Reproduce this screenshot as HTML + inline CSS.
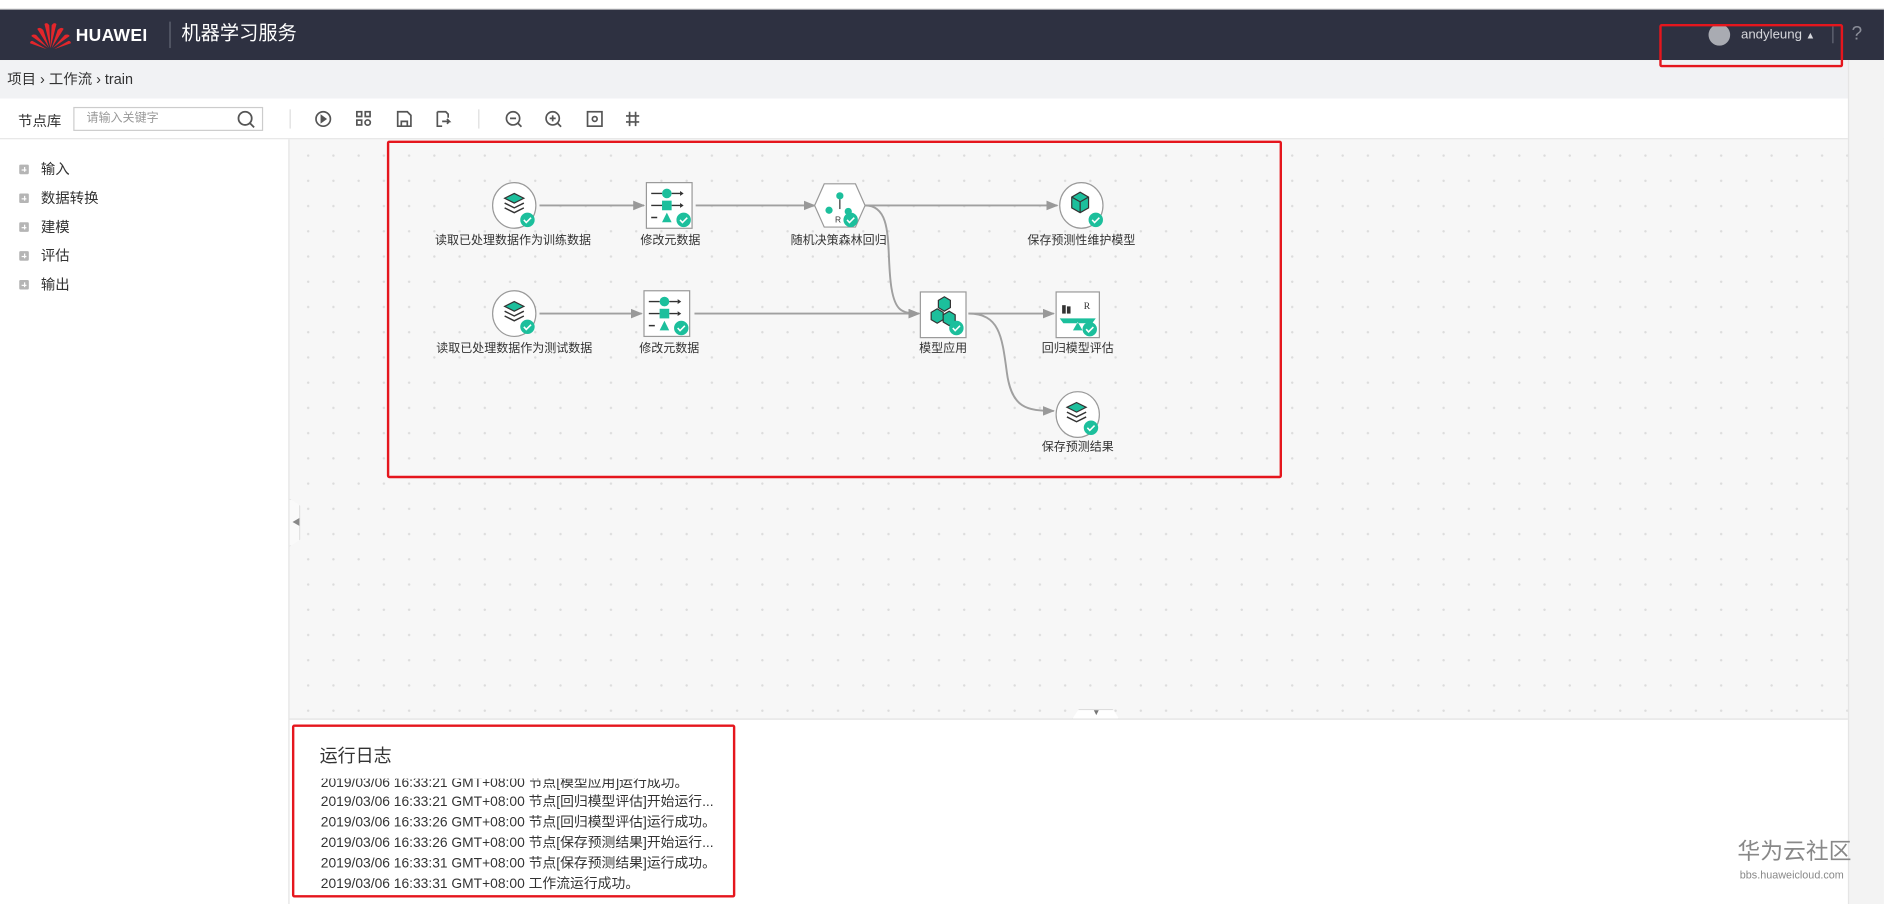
<!DOCTYPE html>
<html><head><meta charset="utf-8">
<style>
*{margin:0;padding:0;box-sizing:border-box}
html,body{width:1884px;height:904px;overflow:hidden;background:#fff}
#w{width:1568px;height:752.4px;transform:scale(1.2015);transform-origin:0 0;position:relative;font-family:"Liberation Sans","Noto Sans CJK SC",sans-serif;color:#333}
.abs{position:absolute}
.top{left:0;top:0;width:1568px;height:8px;background:#fff;border-bottom:1px solid #ddd}
.hdr{left:0;top:8px;width:1568px;height:42px;background:#2e3141;line-height:1}
.bc{left:0;top:50px;width:1568px;height:32px;background:#f1f2f4;font-size:12px;line-height:32px;padding-left:6px;color:#333}
.tb{left:0;top:82px;width:1568px;height:34px;background:#fff;border-bottom:1px solid #e4e4e4}
.side{left:0;top:116px;width:241px;height:637px;background:#fff;border-right:1px solid #e2e2e2}
.side div{position:absolute;left:16px;font-size:12px;color:#333;line-height:14px}
.side span{display:inline-block;width:8px;height:8px;background:#b5b5b5;border-radius:1px;margin-right:10px;vertical-align:0px;position:relative}
.side span:after{content:"";position:absolute;left:2px;top:3.5px;width:4px;height:1px;background:#fff}
.side span:before{content:"";position:absolute;left:3.5px;top:2px;width:1px;height:4px;background:#fff}
.cv{left:241px;top:116px;width:1297px;height:482px;background-color:#f7f7f7;
background-image:radial-gradient(circle,#dcdcdc 0.8px,transparent 1.2px);background-size:21px 21px;background-position:5px 3px}
.log{left:241px;top:598px;width:1297px;height:155px;background:#fff;border-top:1px solid #e0e0e0}
.sb{left:1538px;top:50px;width:30px;height:703px;background:#f3f3f3;border-left:1px solid #e5e5e5}
.red{border:2px solid #e5161d;border-radius:2px}
.lg{position:absolute;left:26px;font-size:11.5px;color:#333;white-space:nowrap}
</style></head><body><div id="w">
<div class="abs top"></div>
<div class="abs hdr">
 <svg class="abs" style="left:24px;top:9px" width="36" height="24" viewBox="0 0 36 24">
  <g fill="#e3262b">
   <path d="M18 23 L13 3 Q15 1 17 4 Z"/><path d="M18 23 L23 3 Q21 1 19 4 Z"/>
   <path d="M17 23 L7 7 Q9 5 12 8 Z"/><path d="M19 23 L29 7 Q27 5 24 8 Z"/>
   <path d="M16 23 L2 13 Q3 11 6 12 Z"/><path d="M20 23 L34 13 Q33 11 30 12 Z"/>
   <path d="M15 24 L1 19 Q1 17 3 17 Z"/><path d="M21 24 L35 19 Q35 17 33 17 Z"/>
  </g></svg>
 <div class="abs" style="left:63px;top:15px;color:#fff;font-weight:bold;font-size:14.5px;letter-spacing:0.3px">HUAWEI</div>
 <div class="abs" style="left:141px;top:10px;width:1px;height:22px;background:#666a78"></div>
 <div class="abs" style="left:151px;top:13px;color:#fff;font-size:16px">机器学习服务</div>
 <div class="abs" style="left:1422px;top:12px;width:18px;height:18px;border-radius:50%;background:#a9abb2"></div>
 <div class="abs" style="left:1449px;top:16px;color:#d6d7dc;font-size:11px">andyleung <span style="font-size:8px">▲</span></div>
 <div class="abs" style="left:1525px;top:14px;width:1px;height:14px;background:#666a78"></div>
 <div class="abs" style="left:1541px;top:13px;color:#8a8d98;font-size:16px">?</div>
</div>
<div class="abs bc">项目 › 工作流 › train</div>
<div class="abs tb">
 <div class="abs" style="left:15px;top:10px;font-size:12px">节点库</div>
 <div class="abs" style="left:61px;top:7px;width:158px;height:20px;border:1px solid #ccc;font-size:10px;color:#999;padding-left:10px;line-height:18px">请输入关键字</div>
 <svg class="abs" style="left:196px;top:9px" width="18" height="18" viewBox="0 0 18 18" fill="none" stroke="#555" stroke-width="1.5"><circle cx="8" cy="7.5" r="5.5"/><path d="M12 11.5l3.5 3.5"/></svg>
 <div class="abs" style="left:241px;top:9px;width:1px;height:16px;background:#ddd"></div>
 <div class="abs" style="left:398px;top:9px;width:1px;height:16px;background:#ddd"></div>
 <svg class="abs" style="left:260px;top:8px" width="290" height="18" viewBox="0 0 290 18" fill="none" stroke="#555" stroke-width="1.4">
  <circle cx="9" cy="9" r="6"/><path d="M7.5 6.5v5l3.5-2.5z" fill="#555"/>
  <rect x="37" y="3" width="4" height="4"/><rect x="44" y="3" width="4" height="4"/><rect x="37" y="10" width="4" height="4"/><circle cx="46" cy="12" r="2.2"/>
  <path d="M71 3h8l3 3v9h-11z M74 15v-4h5v4"/>
  <path d="M104 3h7l2 2v3 M104 3v12h4 M108 11h6 l-2-2 M114 11l-2 2"/>
  <circle cx="167" cy="8.5" r="5.5"/><path d="M164.5 8.5h5 M171 12.5l3 3"/>
  <circle cx="200" cy="8.5" r="5.5"/><path d="M197.5 8.5h5 M200 6v5 M204 12.5l3 3"/>
  <rect x="229" y="3" width="12" height="12"/><circle cx="235" cy="9" r="2"/>
  <path d="M264 3v12 M269 3v12 M261 6.5h11 M261 11.5h11"/>
 </svg>
</div>
<div class="abs side">
 <div style="top:18px"><span></span>输入</div>
 <div style="top:42px"><span></span>数据转换</div>
 <div style="top:66px"><span></span>建模</div>
 <div style="top:90px"><span></span>评估</div>
 <div style="top:114px"><span></span>输出</div>
</div>
<div class="abs cv"></div>
<div class="abs" style="left:241px;top:415px;width:9px;height:40px;background:#fafafa;border:1px solid #ddd;border-left:none;clip-path:polygon(0 0,100% 15%,100% 85%,0 100%)"></div>
<div class="abs" style="left:243px;top:430px;font-size:7px;color:#888">◀</div>
<div class="abs" style="left:892px;top:590px;width:40px;height:9px;background:#fff;border:1px solid #ddd;border-bottom:none;clip-path:polygon(15% 0,85% 0,100% 100%,0 100%)"></div>
<div class="abs" style="left:909px;top:590px;font-size:7px;color:#777">▼</div>

<svg class="abs" style="left:0;top:0" width="1568" height="752" viewBox="0 0 1568 752" font-family="Liberation Sans,Noto Sans CJK SC,sans-serif" font-size="10" fill="#333">
 <defs><marker id="a" markerWidth="10" markerHeight="8" refX="9" refY="4" orient="auto" markerUnits="userSpaceOnUse"><path d="M0 0L10 4L0 8z" fill="#999"/></marker>
 <g id="ck"><circle r="6" fill="#1cbf9c"/><path d="M-3 0l2 2.2 4-4" stroke="#fff" stroke-width="1.3" fill="none"/></g>
 <g id="lay"><path d="M0-9l8 4-8 4-8-4z" fill="#1cbf9c" stroke="#333" stroke-width="1"/><path d="M-8 -1l8 4 8-4 M-8 3l8 4 8-4" fill="none" stroke="#333" stroke-width="1.2"/></g>
 <g id="meta"><path d="M-13-10h9 M4-10h7 M-13 0h9 M4 0h7 M-13 10h5" stroke="#333" stroke-width="1.2"/><path d="M11-12l3 2-3 2z M11-2l3 2-3 2z" fill="#333"/><circle cx="0" cy="-10" r="4" fill="#1cbf9c"/><rect x="-4" y="-4" width="8" height="8" fill="#1cbf9c"/><path d="M0 6l4 8h-8z" fill="#1cbf9c"/></g>
 </defs>
 <g stroke="#a0a0a0" stroke-width="1.6" fill="none" marker-end="url(#a)">
  <path d="M449 171H536"/><path d="M579 171H678"/><path d="M719 171H880"/>
  <path d="M720 171C745 171 737 210 742 240C745 258 750 261 765 261"/>
  <path d="M449 261H534"/><path d="M578 261H765"/><path d="M806 261H877"/>
  <path d="M806 261C832 261 834 280 838 310C842 340 855 342 877 342"/>
 </g>
 <g><ellipse cx="428" cy="171" rx="18" ry="19" fill="#fff" stroke="#999"/><use href="#lay" x="428" y="170"/><use href="#ck" x="439" y="183"/></g>
 <g><rect x="538" y="152" width="38" height="38" fill="#fff" stroke="#999"/><use href="#meta" x="555" y="171"/><use href="#ck" x="569" y="183"/></g>
 <g><path d="M686 153h26l8 18-8 18h-26l-8-18z" fill="#fff" stroke="#999"/><circle cx="699" cy="163" r="3" fill="#1cbf9c"/><path d="M699 166v8" stroke="#333"/><circle cx="690" cy="175" r="3" fill="#1cbf9c"/><circle cx="706" cy="176" r="3" fill="#1cbf9c"/><text x="695" y="185" font-size="7">R</text><use href="#ck" x="708" y="183"/></g>
 <g><ellipse cx="900" cy="171" rx="18" ry="19" fill="#fff" stroke="#999"/><path d="M892 164l7-4 7 4v9l-7 4-7-4z" fill="#1cbf9c" stroke="#333"/><path d="M892 164l7 4 7-4 M899 168v9" stroke="#333" fill="none"/><use href="#ck" x="912" y="183"/></g>
 <g><ellipse cx="428" cy="261" rx="18" ry="19" fill="#fff" stroke="#999"/><use href="#lay" x="428" y="260"/><use href="#ck" x="439" y="272"/></g>
 <g><rect x="536" y="242" width="38" height="38" fill="#fff" stroke="#999"/><use href="#meta" x="553" y="261"/><use href="#ck" x="567" y="273"/></g>
 <g><rect x="766" y="243" width="38" height="38" fill="#fff" stroke="#999"/><path d="M781 250l5-3 5 3v6l-5 3-5-3z M775 260l5-3 5 3v6l-5 3-5-3z M785 262l5-3 5 3v6l-5 3-5-3z" fill="#1cbf9c" stroke="#333"/><use href="#ck" x="796" y="273"/></g>
 <g><rect x="879" y="243" width="36" height="38" fill="#fff" stroke="#999"/><rect x="884" y="254" width="3" height="7" fill="#333"/><rect x="888" y="255" width="3" height="6" fill="#333"/><text x="902" y="257" font-size="8" font-family="Liberation Serif">R</text><path d="M882 265h30l-3 4h-24z M897 268l-4 7h8z" fill="#1cbf9c"/><use href="#ck" x="907" y="274"/></g>
 <g><ellipse cx="897" cy="345" rx="18" ry="19" fill="#fff" stroke="#999"/><use href="#lay" x="896" y="344"/><use href="#ck" x="908" y="356"/></g>
 <g font-size="10">
  <text x="427" y="203" text-anchor="middle">读取已处理数据作为训练数据</text>
  <text x="558" y="203" text-anchor="middle">修改元数据</text>
  <text x="698" y="203" text-anchor="middle">随机决策森林回归</text>
  <text x="900" y="203" text-anchor="middle">保存预测性维护模型</text>
  <text x="428" y="293" text-anchor="middle">读取已处理数据作为测试数据</text>
  <text x="557" y="293" text-anchor="middle">修改元数据</text>
  <text x="785" y="293" text-anchor="middle">模型应用</text>
  <text x="897" y="293" text-anchor="middle">回归模型评估</text>
  <text x="897" y="375" text-anchor="middle">保存预测结果</text>
 </g>
</svg>

<div class="abs log">
 <div class="abs" style="left:25px;top:19px;font-size:15px;color:#333">运行日志</div>
 <div style="position:absolute;left:0;top:44px;width:400px;height:110px;overflow:hidden">
  <div class="lg" style="top:0px;clip-path:inset(5px 0 0 0)">2019/03/06 16:33:21 GMT+08:00 节点[模型应用]运行成功。</div>
  <div class="lg" style="top:16px">2019/03/06 16:33:21 GMT+08:00 节点[回归模型评估]开始运行...</div>
  <div class="lg" style="top:33px">2019/03/06 16:33:26 GMT+08:00 节点[回归模型评估]运行成功。</div>
  <div class="lg" style="top:50px">2019/03/06 16:33:26 GMT+08:00 节点[保存预测结果]开始运行...</div>
  <div class="lg" style="top:67px">2019/03/06 16:33:31 GMT+08:00 节点[保存预测结果]运行成功。</div>
  <div class="lg" style="top:84px">2019/03/06 16:33:31 GMT+08:00 工作流运行成功。</div>
 </div>
</div>
<div class="abs sb"></div>
<div class="abs" style="left:1446px;top:700px;font-size:19px;color:#888;line-height:1">华为云社区</div>
<div class="abs" style="left:1448px;top:724px;font-size:9px;color:#888;line-height:1">bbs.huaweicloud.com</div>

<div class="abs red" style="left:1381px;top:20px;width:153px;height:36px"></div>
<div class="abs red" style="left:322px;top:117px;width:745px;height:281px"></div>
<div class="abs red" style="left:243px;top:603px;width:369px;height:144px"></div>
</div></body></html>
